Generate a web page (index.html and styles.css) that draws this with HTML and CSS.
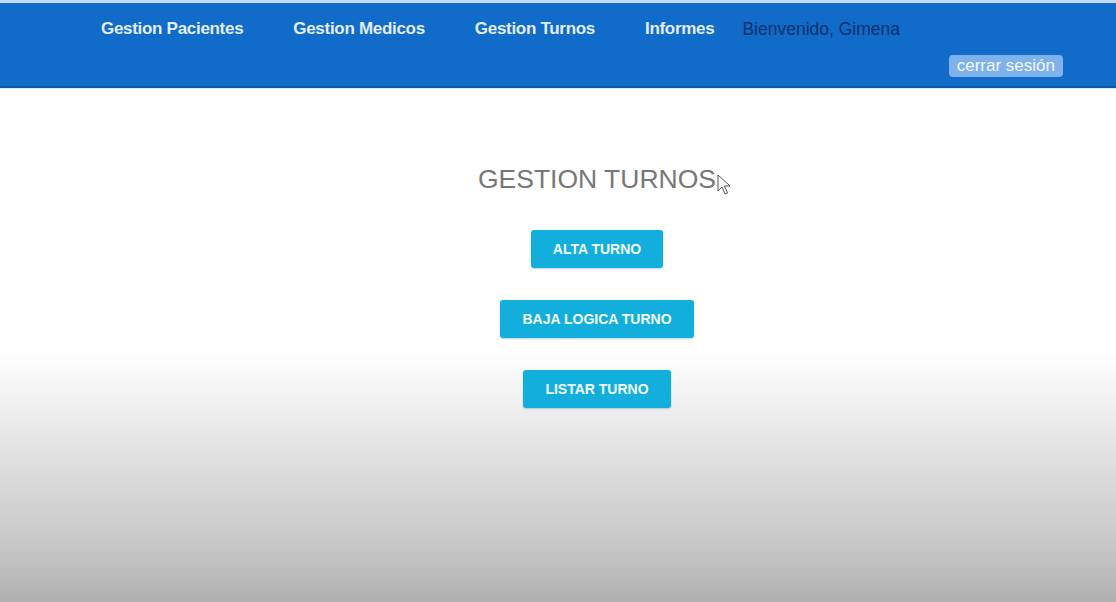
FILE: index.html
```html
<!DOCTYPE html>
<html lang="es">
<head>
<meta charset="utf-8">
<title>Gestion Turnos</title>
<link rel="stylesheet" href="styles.css">
</head>
<body>
<header class="topbar">
  <div class="topbar-row">
    <nav>
      <ul class="nav-list">
        <li><a class="nav-link" href="#">Gestion Pacientes</a></li>
        <li><a class="nav-link" href="#">Gestion Medicos</a></li>
        <li><a class="nav-link" href="#">Gestion Turnos</a></li>
        <li><a class="nav-link" href="#">Informes</a></li>
      </ul>
    </nav>
    <span class="welcome">Bienvenido, Gimena</span>
  </div>
  <div class="topbar-actions">
    <button class="logout">cerrar sesión</button>
  </div>
</header>
<main class="content">
  <div class="title-wrap">
    <h1 class="title">GESTION TURNOS</h1>
    <svg class="cursor" width="14" height="22" viewBox="0 0 14 22" aria-hidden="true">
      <path d="M1 1 L1 17 L5 13 L8 20 L10.5 19 L7.5 12 L13 12 Z" fill="#fff" stroke="#555" stroke-width="1" stroke-linejoin="round"/>
    </svg>
  </div>
  <div class="actions">
    <button class="action-btn">ALTA TURNO</button>
    <button class="action-btn">BAJA LOGICA TURNO</button>
    <button class="action-btn">LISTAR TURNO</button>
  </div>
</main>
</body>
</html>
```
FILE: styles.css
```css
html, body {
  margin: 0;
  padding: 0;
}
body {
  width: 1116px;
  height: 602px;
  overflow: hidden;
  font-family: "Liberation Sans", Arial, sans-serif;
  background: linear-gradient(to bottom,
    #ffffff 0px,
    #ffffff 350px,
    #f1f1f1 400px,
    #dcdcdc 470px,
    #c9c9c9 540px,
    #b0b0b0 602px);
}
.topbar {
  height: 83px;
  background: #106bc9;
  border-top: 3px solid #c6dcf2;
  border-bottom: 2px solid #0b57a8;
  box-shadow: 0 1px 0 #d4ebf7;
  box-sizing: content-box;
  display: flex;
  flex-direction: column;
}
.topbar-row {
  display: flex;
  align-items: center;
  padding: 16px 0 0 101px;
  height: 20px;
}
.nav-list {
  list-style: none;
  margin: 0;
  padding: 0;
  display: flex;
  gap: 50px;
}
.nav-link {
  color: #e4eefb;
  text-decoration: none;
  font-weight: bold;
  font-size: 17px;
  letter-spacing: -0.3px;
  line-height: 20px;
}
.welcome {
  margin-left: 28px;
  color: #0c2f6e;
  font-size: 17.5px;
  line-height: 20px;
}
.topbar-actions {
  display: flex;
  justify-content: flex-end;
  padding-right: 53px;
  margin-top: 16px;
}
.logout {
  background: #7fb1ea;
  color: #f4f8fe;
  border: none;
  border-radius: 4px;
  font-family: "Liberation Sans", Arial, sans-serif;
  font-size: 17px;
  line-height: 22px;
  padding: 0 8px;
  height: 22px;
}
.content {
  margin-left: 78px;
  display: flex;
  flex-direction: column;
  align-items: center;
  padding-top: 76px;
}
.title-wrap {
  position: relative;
}
.title {
  margin: 0;
  font-weight: normal;
  font-size: 26.5px;
  line-height: 30px;
  color: #777777;
}
.cursor {
  position: absolute;
  left: 239px;
  top: 10px;
}
.actions {
  margin-top: 36px;
  display: flex;
  flex-direction: column;
  align-items: center;
  gap: 32px;
}
.action-btn {
  background: #13afdc;
  color: #f2fbff;
  border: none;
  border-radius: 3px;
  font-family: "Liberation Sans", Arial, sans-serif;
  font-weight: bold;
  font-size: 14px;
  line-height: 16px;
  padding: 11px 22px;
  box-shadow: 0 1px 2px rgba(0, 80, 120, 0.25);
}
```
